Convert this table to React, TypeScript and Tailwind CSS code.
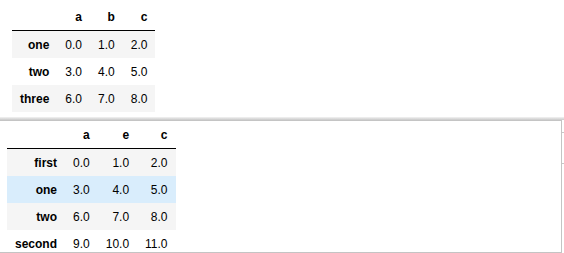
const top = {
  cols: ['a', 'b', 'c'],
  rows: [
    { name: 'one', vals: ['0.0', '1.0', '2.0'] },
    { name: 'two', vals: ['3.0', '4.0', '5.0'] },
    { name: 'three', vals: ['6.0', '7.0', '8.0'] },
  ],
}

const bottom = {
  cols: ['a', 'e', 'c'],
  rows: [
    { name: 'first', vals: ['0.0', '1.0', '2.0'] },
    { name: 'one', vals: ['3.0', '4.0', '5.0'] },
    { name: 'two', vals: ['6.0', '7.0', '8.0'] },
    { name: 'second', vals: ['9.0', '10.0', '11.0'] },
  ],
}

type Frame = typeof top

function DataFrame({ data, hoverRow }: { data: Frame; hoverRow?: number }) {
  return (
    <table className="border-separate border-spacing-0 text-[12px] text-black">
      <thead>
        <tr>
          <th className="h-[27px] px-2 py-0 border-b border-black" />
          {data.cols.map((c) => (
            <th key={c} className="h-[27px] px-2 py-0 text-right font-bold border-b border-black">
              {c}
            </th>
          ))}
        </tr>
      </thead>
      <tbody>
        {data.rows.map((r, i) => {
          const bg = i === hoverRow ? 'bg-[#d9edfc]' : i % 2 === 0 ? 'bg-[#f5f5f5]' : 'bg-white'
          return (
            <tr key={r.name} className={bg}>
              <th className="h-[27px] px-2 py-0 text-right font-bold">{r.name}</th>
              {r.vals.map((v, j) => (
                <td key={j} className="h-[27px] px-2 py-0 text-right">
                  {v}
                </td>
              ))}
            </tr>
          )
        })}
      </tbody>
    </table>
  )
}

export default function App() {
  return (
    <div className="w-[564px] h-[253px] overflow-hidden bg-white flex flex-col font-['Liberation_Sans',Arial,sans-serif]">
      {/* first output */}
      <div className="h-[117px] shrink-0 pl-[12px] pt-[4px]">
        <DataFrame data={top} />
      </div>

      {/* divider shadow */}
      <div className="h-[3px] shrink-0 bg-linear-to-b from-[#f3f3f3] to-[#c9c9c9]" />

      {/* second output */}
      <div className="flex-1 min-h-0 flex">
        <div className="w-[562px] border-t border-r border-b border-[#c4c4c4] pl-[7px] pt-[1px] overflow-hidden">
          <DataFrame data={bottom} hoverRow={1} />
        </div>
        <div className="flex-1 flex flex-col">
          <div className="h-[12px]" />
          <div className="h-px bg-[#c8c8c8]" />
          <div className="h-[30px]" />
          <div className="h-px bg-[#c8c8c8]" />
        </div>
      </div>
    </div>
  )
}
